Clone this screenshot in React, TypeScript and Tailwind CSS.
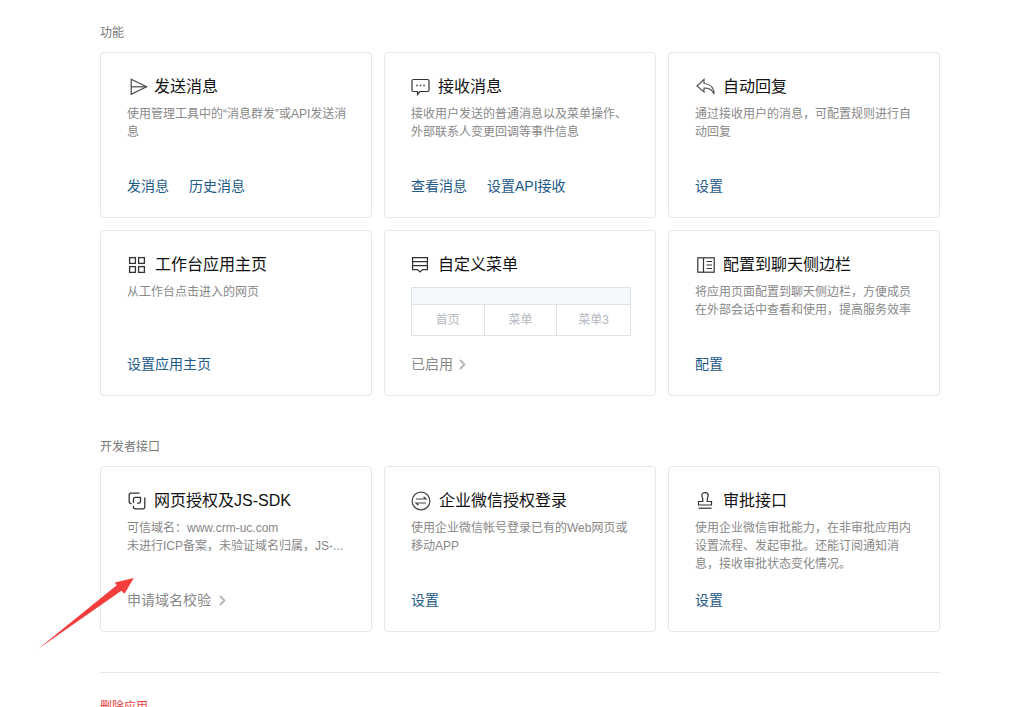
import React from "react";

const font = { fontFamily: '"Liberation Sans", "Noto Sans CJK SC", sans-serif' };

const Send = () => (
  <svg width="18" height="18" viewBox="0 0 18 18" fill="none" stroke="#4a4a4a" strokeWidth="1.2"><path d="M1.2 1.3 L16.6 8.8 L1.2 16.4 Z" /><path d="M1.2 8.8 H16.6" /></svg>
);
const Chat = () => (
  <svg width="19" height="18" viewBox="0 0 19 18" fill="none" stroke="#333" strokeWidth="1.2"><path d="M2.5 1.5 H16.5 A1.5 1.5 0 0 1 18 3 V12 A1.5 1.5 0 0 1 16.5 13.5 H9 L6.5 16.5 V13.5 H2.5 A1.5 1.5 0 0 1 1 12 V3 A1.5 1.5 0 0 1 2.5 1.5 Z" /><path d="M5.2 7.5h1.4M8.8 7.5h1.4M12.4 7.5h1.4" strokeWidth="1.4" /></svg>
);
const Reply = () => (
  <svg width="19" height="18" viewBox="0 0 19 18" fill="none" stroke="#555" strokeWidth="1.2"><path d="M8 1.5 L1 8 L8 14 V10.2 C12.5 9.6 16 11.5 18 16 C18 9.5 14 5.8 8 5.5 Z" /></svg>
);
const Grid = () => (
  <svg width="18" height="18" viewBox="0 0 18 18" fill="none" stroke="#333" strokeWidth="1.3"><rect x="1.6" y="1.6" width="5.8" height="5.8" /><rect x="10.6" y="1.6" width="5.8" height="5.8" /><rect x="1.6" y="10.6" width="5.8" height="5.8" /><rect x="10.6" y="10.6" width="5.8" height="5.8" /></svg>
);
const Menu = () => (
  <svg width="18" height="18" viewBox="0 0 18 18" fill="none" stroke="#333" strokeWidth="1.2"><path d="M1.6 1.6 H16.4 V13.6 H11.5 L9 16 L6.5 13.6 H1.6 Z" /><path d="M1.6 5.6 H16.4 M1.6 9.6 H16.4" /></svg>
);
const Side = () => (
  <svg width="18" height="16" viewBox="0 0 18 16" fill="none" stroke="#333" strokeWidth="1.2"><rect x="0.8" y="0.8" width="16.4" height="14.4" /><path d="M6.5 0.8 V15.2 M9.5 4.5 H15 M9.5 8 H15 M9.5 11.5 H15" /></svg>
);
const Link2 = () => (
  <svg width="18" height="18" viewBox="0 0 18 18" fill="none" stroke="#333" strokeWidth="1.3"><path d="M3.5 11.5 H2.8 A1.6 1.6 0 0 1 1.2 9.9 V2.8 A1.6 1.6 0 0 1 2.8 1.2 H11.5" /><path d="M5.5 11 V7 A1.6 1.6 0 0 1 7.1 5.4 H12.5 V9.5 A1.6 1.6 0 0 1 10.9 11.1 H9" /><path d="M16.8 5.5 V15.2 A1.6 1.6 0 0 1 15.2 16.8 H7 A1.6 1.6 0 0 1 5.4 15.2 V14" /></svg>
);
const Exchange = () => (
  <svg width="20" height="20" viewBox="0 0 20 20" fill="none" stroke="#444" strokeWidth="1.2"><circle cx="10" cy="10" r="8.9" /><path d="M5 8 H15 L12.6 5.8 M15 12 H5 L7.4 14.2" /></svg>
);
const Stamp = () => (
  <svg width="16" height="18" viewBox="0 0 16 18" fill="none" stroke="#333" strokeWidth="1.2"><path d="M5.8 7.5 C5.8 5.5 4.8 5 4.8 3.4 A3.2 2.8 0 0 1 11.2 3.4 C11.2 5 10.2 5.5 10.2 7.5 V9.5 H14.5 V13 H1.5 V9.5 H5.8 Z" /><path d="M1.5 16.2 H14.5" /></svg>
);
const Chevron = ({ className }: { className: string }) => (
  <svg width="7" height="11" viewBox="0 0 7 11" fill="none" stroke="#b4b4b4" strokeWidth="1.8" className={className}><path d="M1 1 L5.5 5.5 L1 10" /></svg>
);

type CardProps = {
  icon: React.ReactNode;
  iconClass: string;
  title: string;
  children: React.ReactNode;
  links: React.ReactNode;
};

function Card({ icon, iconClass, title, children, links }: CardProps) {
  return (
    <div className="flex h-[166px] flex-col rounded border border-[#e4e6e9] bg-white pl-[26px] pr-[24px] pt-[23px]">
      <div className="flex h-[22px] items-center">
        <span className={`flex shrink-0 items-center ${iconClass}`}>{icon}</span>
        <span className="text-[16px] leading-[22px] text-[#111]">{title}</span>
      </div>
      <div className="mt-[7px] flex-1 text-[12px] leading-[18px] text-[#888]">{children}</div>
      {links}
    </div>
  );
}

const Links = ({ items }: { items: string[] }) => (
  <div className="mb-[21px] flex h-[20px] items-center gap-[20px] text-[14px] leading-[20px] text-[#1c5a88]">
    {items.map((t) => (
      <span key={t}>{t}</span>
    ))}
  </div>
);

const GrayLink = ({ text, chevronClass }: { text: string; chevronClass: string }) => (
  <div className="mb-[21px] flex h-[20px] items-center text-[14px] leading-[20px] text-[#888]">
    <span>{text}</span>
    <Chevron className={chevronClass} />
  </div>
);

export default function App() {
  return (
    <div className="relative h-[707px] w-[1024px] overflow-hidden bg-white" style={font}>
      <div className="ml-[100px] w-[840px] pt-[25px]">
        <div className="text-[12px] leading-[16px] text-[#787878]">功能</div>
        <div className="mt-[11px] grid grid-cols-3 gap-[12px]">
          <Card icon={<Send />} iconClass="ml-[3px] mr-[6px]" title="发送消息" links={<Links items={["发消息", "历史消息"]} />}>
            使用管理工具中的“消息群发”或API发送消息
          </Card>
          <Card icon={<Chat />} iconClass="mr-[8px]" title="接收消息" links={<Links items={["查看消息", "设置API接收"]} />}>
            接收用户发送的普通消息以及菜单操作、
            <br />
            外部联系人变更回调等事件信息
          </Card>
          <Card icon={<Reply />} iconClass="ml-[1px] mr-[8px]" title="自动回复" links={<Links items={["设置"]} />}>
            通过接收用户的消息，可配置规则进行自动回复
          </Card>
          <Card icon={<Grid />} iconClass="ml-[1px] mr-[9px]" title="工作台应用主页" links={<Links items={["设置应用主页"]} />}>
            从工作台点击进入的网页
          </Card>
          <Card icon={<Menu />} iconClass="mr-[9px]" title="自定义菜单" links={<GrayLink text="已启用" chevronClass="ml-[6px]" />}>
            <div className="mt-[4px] w-[220px] rounded-[1px] border border-[#dde2e8] text-[12px] text-[#b4b8bf]">
              <div className="h-[17px] border-b border-[#dde2e8] bg-[#f5f8fc]" />
              <div className="grid h-[30px] grid-cols-3 items-center text-center leading-[30px]">
                <span className="border-r border-[#dde2e8]">首页</span>
                <span className="border-r border-[#dde2e8]">菜单</span>
                <span>菜单3</span>
              </div>
            </div>
          </Card>
          <Card icon={<Side />} iconClass="ml-[2px] mr-[8px]" title="配置到聊天侧边栏" links={<Links items={["配置"]} />}>
            将应用页面配置到聊天侧边栏，方便成员
            <br />
            在外部会话中查看和使用，提高服务效率
          </Card>
        </div>
        <div className="mt-[43px] text-[12px] leading-[16px] text-[#787878]">开发者接口</div>
        <div className="mt-[11px] grid grid-cols-3 gap-[12px]">
          <Card icon={<Link2 />} iconClass="ml-[1px] mr-[8px]" title="网页授权及JS-SDK" links={<GrayLink text="申请域名校验" chevronClass="ml-[8px]" />}>
            可信域名：www.crm-uc.com
            <br />
            未进行ICP备案，未验证域名归属，JS-...
          </Card>
          <Card icon={<Exchange />} iconClass="mr-[8px]" title="企业微信授权登录" links={<Links items={["设置"]} />}>
            使用企业微信帐号登录已有的Web网页或
            <br />
            移动APP
          </Card>
          <Card icon={<Stamp />} iconClass="ml-[2px] mr-[10px]" title="审批接口" links={<Links items={["设置"]} />}>
            使用企业微信审批能力，在非审批应用内
            <br />
            设置流程、发起审批。还能订阅通知消
            <br />
            息，接收审批状态变化情况。
          </Card>
        </div>
        <div className="mt-[40px] h-px bg-[#e5e5e5]" />
        <div className="mt-[26px] text-[12px] leading-[16px] text-[#e64340]">删除应用</div>
      </div>
      <svg className="pointer-events-none absolute left-[30px] top-[570px]" width="110" height="85" viewBox="30 570 110 85">
        <polygon points="38,649 116.7,585.2 114.8,582.6 133.8,578 124.5,593.8 121.4,590.8" fill="#f43d3d" />
      </svg>
    </div>
  );
}
